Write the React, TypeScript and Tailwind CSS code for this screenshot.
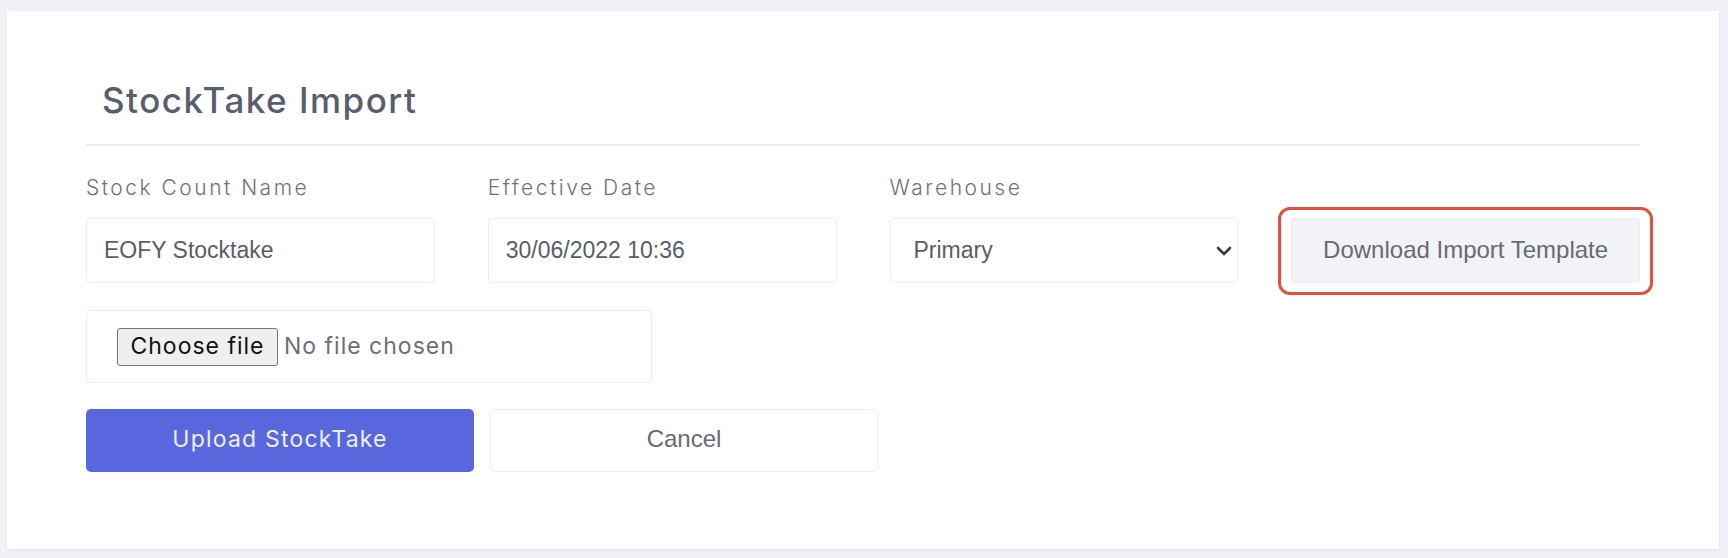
import React from "react";

function Label({ children }: { children?: React.ReactNode }) {
  return (
    <div className="h-[21px] text-[21px] leading-none font-light tracking-[2.5px] text-[#6f717c] whitespace-nowrap">
      {children}
    </div>
  );
}

function TextBox({ children }: { children: React.ReactNode }) {
  return (
    <div className="h-[65px] rounded-[4px] border border-[#ebedf2] bg-white pl-[17px] flex items-center text-[23px] text-[#5a5d67] font-[family-name:'Liberation_Sans',Arial,sans-serif]">
      {children}
    </div>
  );
}

export default function App() {
  return (
    <div className="min-h-[558px] bg-[#f0f1f7] pt-[11px] pb-[9px] pl-[7px] pr-[9px] font-[family-name:Inter,sans-serif]">
      <div className="h-[538px] bg-white px-[79px] pt-[72px] shadow-[0_1px_2px_rgba(82,63,105,0.08)]">
        <div className="pl-[16px] pb-[26px] border-b-2 border-[#ebedf2]">
          <h1 className="text-[35px] leading-none font-medium tracking-[1.5px] text-[#595d6e]">
            StockTake Import
          </h1>
        </div>

        <div className="mt-[31px] grid grid-cols-4 gap-x-[53px] gap-y-[20px]">
          <Label>Stock Count Name</Label>
          <Label>Effective Date</Label>
          <Label>Warehouse</Label>
          <Label />

          <TextBox>EOFY Stocktake</TextBox>
          <TextBox>30/06/2022 10:36</TextBox>
          <div className="h-[65px] rounded-[4px] border border-[#ebedf2] bg-white pl-[23px] pr-[5px] flex items-center justify-between text-[23px] text-[#5a5d67] font-[family-name:'Liberation_Sans',Arial,sans-serif]">
            <span>Primary</span>
            <svg width="16" height="10" viewBox="0 0 16 10" fill="none">
              <polyline
                points="2,2 8,8 14,2"
                stroke="#3b3c40"
                strokeWidth="2.6"
                strokeLinecap="round"
                strokeLinejoin="round"
              />
            </svg>
          </div>
          <div className="relative">
            <button className="w-full h-[65px] pb-[2px] rounded-[4px] border border-[#ebedf2] bg-[#f2f3f7] text-[24px] text-[#686a74] font-[family-name:'Liberation_Sans',Arial,sans-serif]">
              Download Import Template
            </button>
            <div className="pointer-events-none absolute -left-[13px] -right-[13px] -top-[11px] -bottom-[12px] rounded-[12px] border-[3px] border-[#e2513d]" />
          </div>
        </div>

        <div className="mt-[27px] w-[566px] h-[73px] rounded-[4px] border border-[#ebedf2] bg-white pl-[30px] flex items-center">
          <div className="w-[161px] h-[38px] rounded-[3px] border border-[#767676] bg-[#efefef] flex items-center justify-center text-[23px] tracking-[1px] text-[#111111]">
            Choose file
          </div>
          <span className="ml-[6px] text-[23px] tracking-[1px] text-[#6b6e78]">No file chosen</span>
        </div>

        <div className="mt-[26px] flex gap-[16px]">
          <button className="w-[388px] h-[63px] pb-[3px] rounded-[5px] bg-[#5867dd] text-[23px] tracking-[1.2px] text-[#eef0fb]">
            Upload StockTake
          </button>
          <button className="w-[388px] h-[63px] pb-[3px] rounded-[5px] border border-[#ebedf2] bg-white text-[24px] text-[#686a74] font-[family-name:'Liberation_Sans',Arial,sans-serif]">
            Cancel
          </button>
        </div>
      </div>
    </div>
  );
}
